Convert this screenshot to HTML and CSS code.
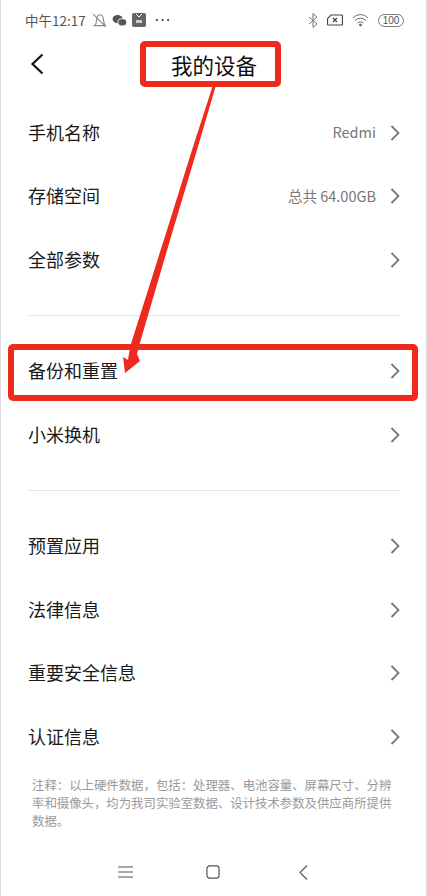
FILE: index.html
```html
<!DOCTYPE html>
<html lang="zh">
<head>
  <meta charset="UTF-8" />
  <title>我的设备</title>
  <link rel="stylesheet" href="styles.css">
</head>
<body>
  <div class="phone">

    <div class="status">
      <span class="time">中午12:17</span>
      <svg class="ico" width="15" height="15" viewBox="2 2 13 13" fill="none" stroke="#8a8a8a" stroke-width="1"><path d="M3 13h11M4.500 13c1.500-2 1.200-4 1.600-6C6.500 5 7.500 3.500 9 3.500s2.500 1.500 2.800 3.500c.3 2 .2 4 1.700 6M3 3l11 11"/></svg>
      <svg class="ico" width="15" height="13" viewBox="0 0 16 14" fill="#555"><ellipse cx="6" cy="5.500" rx="5.500" ry="4.500"/><ellipse cx="11" cy="9" rx="4.800" ry="3.900" stroke="#fff" stroke-width="1"/></svg>
      <svg class="ico" width="14" height="14" viewBox="0 0 14 14"><rect width="14" height="14" rx="2" fill="#666"/><path d="M4 1l3 3 3-3" stroke="#fff" fill="none"/><rect x="4" y="7" width="6" height="3" fill="#ccc"/></svg>
      <svg class="ico dots" width="15" height="4" viewBox="0 0 16 4" fill="#444"><circle cx="2" cy="2" r="1.200"/><circle cx="8" cy="2" r="1.200"/><circle cx="14" cy="2" r="1.200"/></svg>
      <span class="status-right">
        <svg width="10" height="15" viewBox="0 0 10 15" fill="none" stroke="#777" stroke-width="1"><path d="M1 4l8 7-4 3.500V.5l4 3.500-8 7"/></svg>
        <svg width="16" height="12" viewBox="0 0 16 12" fill="none" stroke="#444" stroke-width="1.200"><path d="M4 1h10.500a1 1 0 0 1 1 1v8a1 1 0 0 1-1 1h-13a1 1 0 0 1-1-1V4.500z"/><path d="M6 4l4 4M10 4l-4 4"/></svg>
        <svg width="17" height="14" viewBox="0 0 17 14" fill="none" stroke="#666" stroke-width="1"><path d="M1 5c4-4.500 11-4.500 15 0M3 7.500c3-3 8-3 11 0M5.500 10c1.500-1.500 4.500-1.500 6 0"/><circle cx="8.500" cy="12" r="1" fill="#666"/></svg>
        <span class="battery">100</span>
      </span>
    </div>

    <div class="head">
      <svg width="14" height="22" viewBox="0 0 14 22" fill="none" stroke="#111" stroke-width="2.200"><path d="M12.500 1.500L2.500 11l10 9.500"/></svg>
      <span class="head-title">我的设备</span>
    </div>

    <div class="row"><span>手机名称</span><span class="val">Redmi</span><svg class="chev" width="10" height="16" viewBox="0 0 10 16"><path d="M1.500 1l7 7-7 7"/></svg></div>
    <div class="row"><span>存储空间</span><span class="val">总共 64.00GB</span><svg class="chev" width="10" height="16" viewBox="0 0 10 16"><path d="M1.500 1l7 7-7 7"/></svg></div>
    <div class="row"><span>全部参数</span><svg class="chev" width="10" height="16" viewBox="0 0 10 16"><path d="M1.500 1l7 7-7 7"/></svg></div>

    <div class="line"></div>

    <div class="row"><span>备份和重置</span><svg class="chev" width="10" height="16" viewBox="0 0 10 16"><path d="M1.500 1l7 7-7 7"/></svg></div>
    <div class="row"><span>小米换机</span><svg class="chev" width="10" height="16" viewBox="0 0 10 16"><path d="M1.500 1l7 7-7 7"/></svg></div>

    <div class="line"></div>

    <div class="row"><span>预置应用</span><svg class="chev" width="10" height="16" viewBox="0 0 10 16"><path d="M1.500 1l7 7-7 7"/></svg></div>
    <div class="row"><span>法律信息</span><svg class="chev" width="10" height="16" viewBox="0 0 10 16"><path d="M1.500 1l7 7-7 7"/></svg></div>
    <div class="row"><span>重要安全信息</span><svg class="chev" width="10" height="16" viewBox="0 0 10 16"><path d="M1.500 1l7 7-7 7"/></svg></div>
    <div class="row"><span>认证信息</span><svg class="chev" width="10" height="16" viewBox="0 0 10 16"><path d="M1.500 1l7 7-7 7"/></svg></div>

    <p class="note">注释&#xFF1A;以上硬件数据&#xFF0C;包括&#xFF1A;处理器、电池容量、屏幕尺寸、分辨<br>率和摄像头&#xFF0C;均为我司实验室数据、设计技术参数及供应商所提供<br>数据。</p>

    <div class="nav">
      <svg width="15" height="12" viewBox="0 0 15 12" fill="none" stroke="#555" stroke-width="1.100"><path d="M0 1h15M0 6h15M0 11h15"/></svg>
      <svg width="14" height="14" viewBox="0 0 15 15" fill="none" stroke="#555" stroke-width="1.300"><rect x="1" y="1" width="13" height="13" rx="3"/></svg>
      <svg width="9" height="15" viewBox="0 0 9 15" fill="none" stroke="#555" stroke-width="1.100"><path d="M8 .5L1 7.500l7 7"/></svg>
    </div>

    <!-- red marks drawn on top of the screenshot -->
    <div class="mark mark-title"></div>
    <div class="mark mark-row"></div>
    <svg class="arrow" width="427" height="896" viewBox="0 0 427 896"><polygon fill="#ee2a1e" points="213,85 216,85 197,150 173,230 139,346 137,354 140,361 125,373 123,357 128,360 130,347 167,230 192,150"/></svg>

  </div>
</body>
</html>
```

FILE: styles.css
```css
* {
  box-sizing: border-box;
}
body {
  margin: 0;
  background-color: white;
  font-family: "Noto Sans CJK SC", "Noto Sans", sans-serif;
}
.phone {
  position: relative;
  width: 427px;
  height: 896px;
  overflow: hidden;
  border-left: 1px solid #ddd;
  border-right: 1px solid #ddd;
  color: #1a1a1a;
}
.status {
  display: flex;
  align-items: center;
  height: 40px;
  padding: 0 22px 0 24px;
  color: #555;
  font-size: 13.500px;
}
.time {
  margin-right: 6px;
}
.ico {
  margin-right: 5px;
}
.dots {
  margin-left: 4px;
}
.status-right {
  display: flex;
  align-items: center;
  gap: 9px;
  margin-left: auto;
}
.battery {
  width: 26px;
  height: 13px;
  border: 1px solid #777;
  border-radius: 7px;
  font: 10px/11px "Liberation Sans", sans-serif;
  text-align: center;
}
.head {
  display: flex;
  align-items: center;
  height: 60px;
  padding: 0 0 12px 29px;
}
.head-title {
  margin-left: 127px;
  font-size: 21.500px;
  color: #111;
}
.row {
  display: flex;
  align-items: center;
  height: 63.500px;
  padding: 0 26px 0 27px;
  font-size: 18px;
}
.val {
  margin-left: auto;
  font-size: 14.500px;
  color: #777;
}
.chev {
  margin: 2px 0 0 14px;
  fill: none;
  stroke: #777;
  stroke-width: 1.800;
}
.row > span:first-child + .chev {
  margin-left: auto;
}
.line {
  height: 1px;
  margin: 24px 26px 23px 27px;
  background-color: #e8e8e8;
}
.note {
  margin: 8px 0 0 31px;
  font-size: 12.400px;
  line-height: 18px;
  color: #999;
  white-space: nowrap;
}
.nav {
  display: flex;
  align-items: center;
  gap: 73px;
  margin: 35px 0 0 117px;
}
.nav svg:last-child {
  margin-left: 6px;
}
.mark {
  position: absolute;
  border: 6px solid #ee2a1e;
  border-radius: 5px;
}
.mark-title {
  left: 139px;
  top: 41px;
  width: 141px;
  height: 46px;
}
.mark-row {
  left: 7px;
  top: 344px;
  width: 410px;
  height: 57px;
}
.arrow {
  position: absolute;
  left: -1px;
  top: 0;
}
```
